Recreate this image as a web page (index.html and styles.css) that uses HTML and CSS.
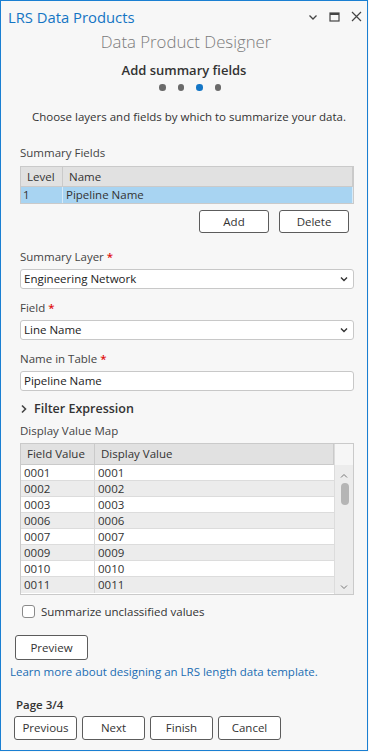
FILE: index.html
```html
<!DOCTYPE html>
<html lang="en">
<head>
    <meta charset="UTF-8">
    <meta name="viewport" content="width=device-width, initial-scale=1.0">
    <title>LRS Data Products</title>
    <link rel="stylesheet" href="styles.css">
</head>
<body>
    <div class="window">
        <div class="titlebar">
            <span class="title">LRS Data Products</span>
            <div class="controls">
                <svg width="10" height="10" viewBox="0 0 10 10"><path d="M1.5 3.5 L5 7 L8.5 3.5" fill="none" stroke="#444" stroke-width="1.3"/></svg>
                <svg width="11" height="10" viewBox="0 0 11 10"><rect x="1" y="1" width="9" height="8" fill="none" stroke="#444" stroke-width="1.2"/><rect x="1" y="1" width="9" height="2" fill="#444"/></svg>
                <svg width="11" height="11" viewBox="0 0 11 11"><path d="M1 1 L10 10 M10 1 L1 10" stroke="#444" stroke-width="1.2"/></svg>
            </div>
        </div>

        <div class="heading">Data Product Designer</div>
        <div class="step">Add summary fields</div>
        <div class="dots">
            <span class="dot"></span>
            <span class="dot"></span>
            <span class="dot active"></span>
            <span class="dot"></span>
        </div>
        <div class="intro">Choose layers and fields by which to summarize your data.</div>

        <div class="content">
            <div class="label first">Summary Fields</div>
            <div class="grid summary">
                <div class="row head"><span>Level</span><span>Name</span></div>
                <div class="row selected"><span>1</span><span>Pipeline Name</span></div>
            </div>
            <div class="row-buttons">
                <button class="btn add">Add</button>
                <button class="btn add">Delete</button>
            </div>

            <div class="label layer">Summary Layer <span class="req">*</span></div>
            <div class="select"><span>Engineering Network</span><svg width="10" height="10" viewBox="0 0 10 10"><path d="M2 3.5 L5 6.5 L8 3.5" fill="none" stroke="#333" stroke-width="1.4"/></svg></div>

            <div class="label">Field <span class="req">*</span></div>
            <div class="select"><span>Line Name</span><svg width="10" height="10" viewBox="0 0 10 10"><path d="M2 3.5 L5 6.5 L8 3.5" fill="none" stroke="#333" stroke-width="1.4"/></svg></div>

            <div class="label">Name in Table <span class="req">*</span></div>
            <div class="input">Pipeline Name</div>

            <div class="expander">
                <svg width="8" height="10" viewBox="0 0 8 10"><path d="M2 1.5 L5.5 5 L2 8.5" fill="none" stroke="#444" stroke-width="1.6"/></svg>
                <span>Filter Expression</span>
            </div>

            <div class="label map">Display Value Map</div>
            <div class="dvm">
                <div class="grid values">
                    <div class="row head"><span>Field Value</span><span>Display Value</span></div>
                    <div class="row"><span>0001</span><span>0001</span></div>
                    <div class="row alt"><span>0002</span><span>0002</span></div>
                    <div class="row"><span>0003</span><span>0003</span></div>
                    <div class="row alt"><span>0006</span><span>0006</span></div>
                    <div class="row"><span>0007</span><span>0007</span></div>
                    <div class="row alt"><span>0009</span><span>0009</span></div>
                    <div class="row"><span>0010</span><span>0010</span></div>
                    <div class="row alt"><span>0011</span><span>0011</span></div>
                </div>
                <div class="scrollbar">
                    <div class="scroll-head"></div>
                    <div class="track">
                        <svg width="8" height="6" viewBox="0 0 8 6"><path d="M1 4.5 L4 1.5 L7 4.5" fill="none" stroke="#777" stroke-width="1"/></svg>
                        <div class="thumb"></div>
                        <div class="spacer"></div>
                        <svg width="8" height="6" viewBox="0 0 8 6"><path d="M1 1.5 L4 4.5 L7 1.5" fill="none" stroke="#777" stroke-width="1"/></svg>
                    </div>
                </div>
            </div>

            <label class="check">
                <span class="box"></span>
                <span>Summarize unclassified values</span>
            </label>
        </div>

        <div class="footer">
            <button class="btn preview">Preview</button>
            <a class="link" href="#">Learn more about designing an LRS length data template.</a>
            <div class="page">Page 3/4</div>
            <div class="nav">
                <button class="btn nav-btn">Previous</button>
                <button class="btn nav-btn">Next</button>
                <button class="btn nav-btn">Finish</button>
                <button class="btn nav-btn">Cancel</button>
            </div>
        </div>
    </div>
</body>
</html>
```

FILE: styles.css
```css
body {
    margin: 0;
    font-family: "Open Sans", "Noto Sans", sans-serif;
    font-size: 11.5px;
    color: #333;
    background-color: #f7f7f7;
}
.window {
    width: 368px;
    height: 751px;
    box-sizing: border-box;
    border: 1px solid #1a7fd2;
    background-color: #f7f7f7;
}
.titlebar {
    height: 30px;
    display: flex;
    align-items: center;
    justify-content: space-between;
    padding: 0 5px 0 7px;
}
.title {
    font-size: 14.8px;
    color: #1475c4;
    margin-top: 1px;
}
.controls {
    display: flex;
    align-items: center;
    gap: 11px;
    margin-top: 1px;
}
.heading {
    text-align: center;
    font-size: 16.8px;
    font-weight: 300;
    color: #7b7b7b;
    line-height: 22px;
    padding-left: 4px;
}
.step {
    text-align: center;
    font-size: 13px;
    font-weight: 600;
    color: #333;
    line-height: 18px;
    margin-top: 8px;
}
.dots {
    display: flex;
    justify-content: center;
    gap: 12px;
    margin-top: 5px;
    padding-left: 12px;
}
.dot {
    width: 6.5px;
    height: 6.5px;
    border-radius: 50%;
    background-color: #6a6a6a;
}
.dot.active {
    background-color: #1476c6;
}
.intro {
    text-align: center;
    line-height: 16px;
    margin-top: 18px;
    padding-left: 10px;
}
.content {
    padding: 0 13px 0 19px;
}
.label {
    line-height: 16px;
    margin-top: 11px;
    margin-bottom: 4px;
    color: #444;
}
.label.first {
    margin-top: 20px;
    margin-bottom: 5px;
}
.label.layer {
    margin-top: 16px;
}
.label.map {
    margin-top: 5px;
}
.req {
    color: #e01010;
    font-weight: 600;
}
.grid {
    background-color: #fff;
}
.row {
    display: grid;
    height: 16px;
    line-height: 15px;
    box-sizing: border-box;
    border-bottom: 1px solid #dcdcdc;
}
.row span {
    padding-left: 3px;
    border-right: 1px solid #d8d8d8;
    white-space: nowrap;
    overflow: hidden;
}
.row span:last-child {
    border-right: none;
}
.row.head {
    height: 21px;
    line-height: 20px;
    background-color: #e1e1e1;
    border-bottom: 1px solid #cacaca;
}
.row.head span {
    padding-left: 6px;
    border-right: 1px solid #cacaca;
}
.summary {
    border: 1px solid #cacaca;
}
.summary .row {
    grid-template-columns: 42px 1fr;
}
.summary .row.head {
    height: 20px;
}
.summary .selected {
    background-color: #a8d4f2;
    border-bottom: none;
}
.summary .selected span {
    border-right: 1px solid #d6eaf8;
    padding-left: 2px;
}
.summary .selected span:last-child {
    padding-left: 3px;
}
.row-buttons {
    display: flex;
    justify-content: flex-end;
    gap: 10px;
    margin-top: 6px;
    padding-right: 5px;
}
.btn {
    font-family: "Open Sans", "Noto Sans", sans-serif;
    font-size: 11.5px;
    color: #333;
    background-color: #fff;
    border: 1px solid #5c5c5c;
    border-radius: 3px;
    padding: 0;
    height: 24px;
}
.btn.add {
    width: 70px;
    height: 23px;
}
.select, .input {
    height: 20px;
    box-sizing: border-box;
    background-color: #fff;
    border: 1px solid #c8c8c8;
    border-radius: 3px;
    display: flex;
    align-items: center;
    justify-content: space-between;
    padding: 0 4px 0 3px;
    color: #222;
}
.input {
    margin-bottom: 9px;
}
.expander {
    display: flex;
    align-items: center;
    gap: 6px;
    font-size: 12.5px;
    font-weight: 600;
    color: #333;
    line-height: 18px;
}
.dvm {
    display: flex;
    border: 1px solid #cacaca;
    height: 152px;
    box-sizing: border-box;
    background-color: #fff;
}
.values {
    flex: 1;
}
.values .row {
    grid-template-columns: 74px 1fr;
}
.values .row.alt {
    background-color: #ececec;
}
.values .row:last-child {
    border-bottom: none;
}
.scrollbar {
    width: 18px;
    display: flex;
    flex-direction: column;
    border-left: 1px solid #dcdcdc;
}
.scroll-head {
    height: 21px;
    background-color: #f6f6f6;
}
.track {
    flex: 1;
    background-color: #ececec;
    display: flex;
    flex-direction: column;
    align-items: center;
    padding: 8px 0 4px;
}
.thumb {
    width: 8px;
    height: 22px;
    border-radius: 4px;
    background-color: #b5b5b5;
    margin-top: 4px;
    margin-left: 1px;
}
.spacer {
    flex: 1;
}
.check {
    display: flex;
    align-items: center;
    gap: 6px;
    margin-top: 9px;
    margin-left: 2px;
    line-height: 16px;
}
.box {
    width: 13px;
    height: 13px;
    box-sizing: border-box;
    border: 1px solid #8a8a8a;
    border-radius: 3px;
    background-color: #fff;
}
.footer {
    padding: 0 0 0 9px;
}
.preview {
    width: 73px;
    height: 25px;
    margin-top: 15px;
    margin-left: 5px;
    display: block;
}
.link {
    display: block;
    color: #1a6db3;
    text-decoration: none;
    line-height: 16px;
    margin-top: 4px;
}
.page {
    font-weight: 600;
    color: #333;
    line-height: 16px;
    margin-top: 17px;
    margin-left: 6px;
}
.nav {
    display: flex;
    gap: 5px;
    margin-top: 3px;
    margin-left: 4px;
}
.nav-btn {
    width: 63px;
}
```
